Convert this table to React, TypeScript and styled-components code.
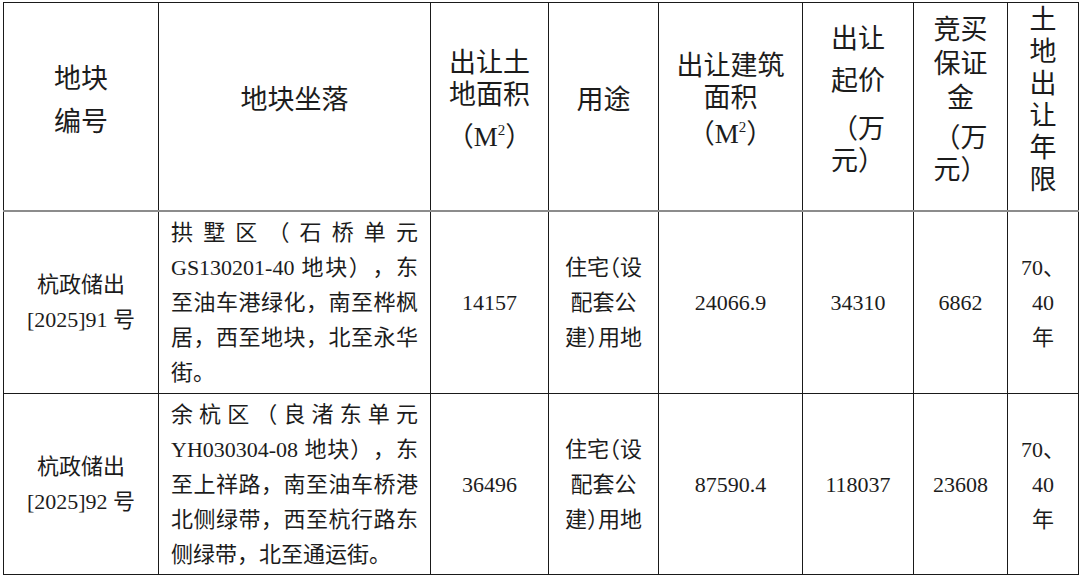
import React from 'react'
import styled, { createGlobalStyle } from 'styled-components'

const GlobalStyle = createGlobalStyle`
  html, body {
    margin: 0;
    padding: 0;
    background: #ffffff;
  }
  body {
    font-family: "Liberation Serif", "Noto Sans CJK SC", serif;
    color: #1c1c1c;
    text-spacing-trim: space-all;
  }
`

const Page = styled.div`
  padding: 2px 0 0 3px;
`

const Table = styled.table`
  border-collapse: collapse;
  table-layout: fixed;
  width: 1076px;
  border: 1px solid #1a1a1a;
`

const HeadRow = styled.tr`
  height: 208px;
`

const BodyRow = styled.tr<{ $h: number }>`
  height: ${({ $h }) => $h}px;
`

const HeadCell = styled.th`
  border: 1px solid #1a1a1a;
  border-bottom: 2px solid #8c8c8c;
  padding: 0 0 12px;
  vertical-align: middle;
  text-align: center;
  font-weight: 400;
  font-size: 27px;
  line-height: 32px;
`

const HeadLine = styled.div<{ $gap?: number }>`
  margin-top: ${({ $gap }) => $gap ?? 0}px;
  white-space: nowrap;
`

const Cell = styled.td`
  border: 1px solid #1a1a1a;
  padding: 0 6px;
  vertical-align: middle;
  text-align: center;
  font-size: 22px;
  line-height: 35px;
`

const PlaceCell = styled(Cell)`
  padding: 0 12px;
  text-align: justify;
`

const Line = styled.div`
  white-space: nowrap;
`

const Half = styled.span`
  font-feature-settings: "halt";
`

const Sup = styled.span`
  font-size: 15px;
  line-height: 0;
  vertical-align: 11px;
`

const M2 = (
  <>
    <Half>（</Half>M<Sup>2</Sup>
    <Half>）</Half>
  </>
)

type HeadSpec = { lines: { t: React.ReactNode; gap?: number }[] }

const heads: HeadSpec[] = [
  { lines: [{ t: '地块' }, { t: '编号', gap: 11 }] },
  { lines: [{ t: '地块坐落' }] },
  { lines: [{ t: '出让土' }, { t: '地面积' }, { t: M2, gap: 10 }] },
  { lines: [{ t: '用途' }] },
  { lines: [{ t: '出让建筑' }, { t: '面积' }, { t: M2, gap: 4 }] },
  { lines: [{ t: '出让' }, { t: '起价', gap: 10 }, { t: '（万', gap: 16 }, { t: '元）' }] },
  { lines: [{ t: '竞买' }, { t: '保证', gap: 2 }, { t: '金', gap: 2 }, { t: '（万', gap: 8 }, { t: '元）' }] },
  { lines: ['土', '地', '出', '让', '年', '限'].map((t) => ({ t })) },
]

const colWidths = [155, 272, 118, 110, 144, 111, 94, 71]

const useFirst = (
  <>
    住宅<Half>（</Half>设
  </>
)
const useLast = (
  <>
    建<Half>）</Half>用地
  </>
)

const plots = [
  {
    code: ['杭政储出', '[2025]91 号'],
    place: '拱墅区（石桥单元GS130201-40 地块），东至油车港绿化，南至桦枫居，西至地块，北至永华街。',
    area: '14157',
    floor: '24066.9',
    price: '34310',
    deposit: '6862',
    height: 183,
  },
  {
    code: ['杭政储出', '[2025]92 号'],
    place: '余杭区（良渚东单元YH030304-08 地块），东至上祥路，南至油车桥港北侧绿带，西至杭行路东侧绿带，北至通运街。',
    area: '36496',
    floor: '87590.4',
    price: '118037',
    deposit: '23608',
    height: 181,
  },
]

export default function App() {
  return (
    <Page>
      <GlobalStyle />
      <Table>
        <colgroup>
          {colWidths.map((w, i) => (
            <col key={i} style={{ width: w }} />
          ))}
        </colgroup>
        <thead>
          <HeadRow>
            {heads.map((h, i) => (
              <HeadCell key={i}>
                {h.lines.map((l, j) => (
                  <HeadLine key={j} $gap={l.gap}>
                    {l.t}
                  </HeadLine>
                ))}
              </HeadCell>
            ))}
          </HeadRow>
        </thead>
        <tbody>
          {plots.map((p) => (
            <BodyRow key={p.code[1]} $h={p.height}>
              <Cell>
                {p.code.map((c) => (
                  <Line key={c}>{c}</Line>
                ))}
              </Cell>
              <PlaceCell>{p.place}</PlaceCell>
              <Cell>{p.area}</Cell>
              <Cell>
                <Line>{useFirst}</Line>
                <Line>配套公</Line>
                <Line>{useLast}</Line>
              </Cell>
              <Cell>{p.floor}</Cell>
              <Cell>{p.price}</Cell>
              <Cell>{p.deposit}</Cell>
              <Cell>
                <Line>70、</Line>
                <Line>40</Line>
                <Line>年</Line>
              </Cell>
            </BodyRow>
          ))}
        </tbody>
      </Table>
    </Page>
  )
}
